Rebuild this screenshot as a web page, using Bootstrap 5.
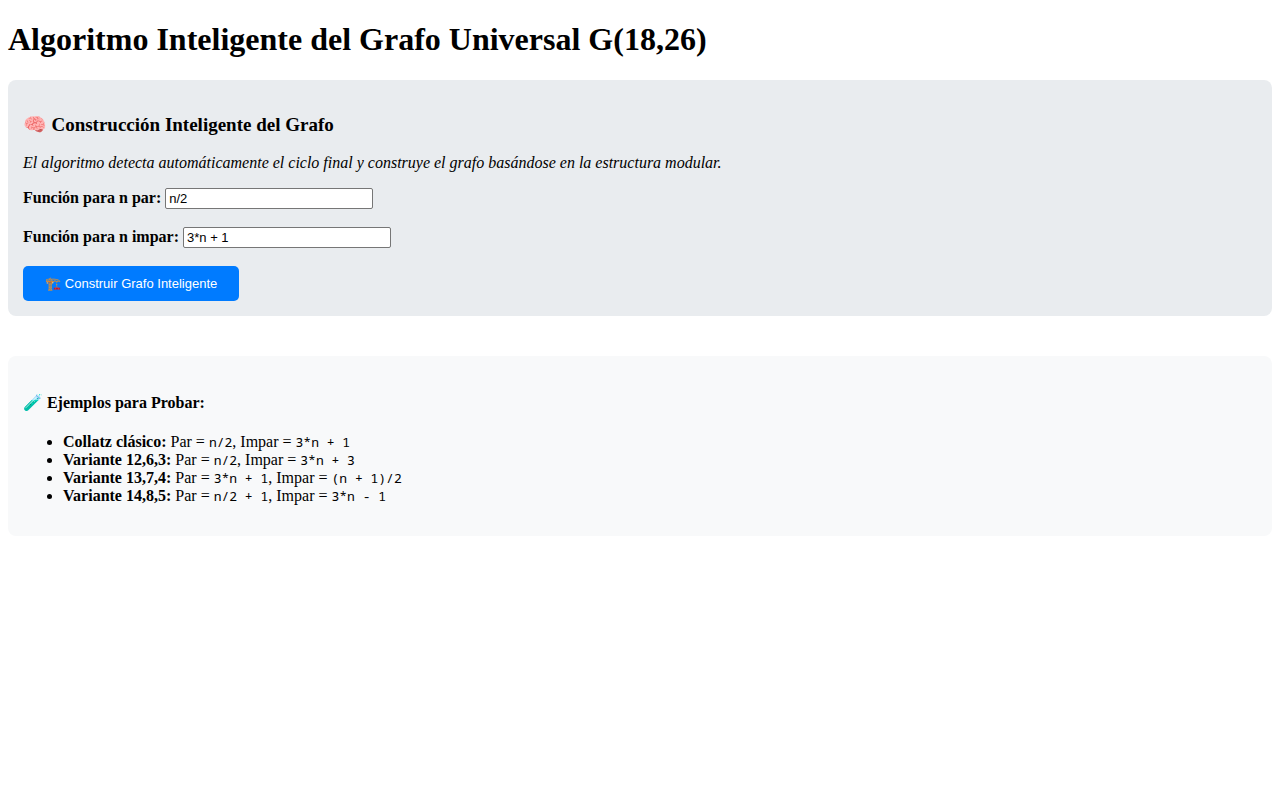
<!DOCTYPE html>
<html lang="es">
<head>
<meta charset="utf-8">
<meta name="viewport" content="width=device-width, initial-scale=1">
<title>Algoritmo Inteligente del Grafo Universal G(18,26)</title>
<link href="https://cdn.jsdelivr.net/npm/bootstrap@5.3.0/dist/css/bootstrap.min.css" rel="stylesheet">
<style>
  body { font-family: "Liberation Serif", "Noto Color Emoji", serif; font-size: 16px; line-height: 18px; color: #000; }
  h1, h2, h3 { font-weight: 700; color: #000; }
  .page-title { font-size: 32px; line-height: 37px; margin: 21px 0 22px; }
  .panel { padding: 15px; border-radius: 8px; }
  .panel-build { background: #e9ecef; margin-bottom: 40px; }
  .panel-examples { background: #f8f9fa; }
  .panel-title { font-size: 19px; line-height: 22px; margin: 19px 0 18px; }
  .examples-title { font-size: 16px; line-height: 19px; margin: 22px 0 21px; }
  .field { height: 21px; margin-bottom: 18px; }
  .field input { width: 208px; height: 21px; padding: 1px 3px; border: 1px solid #767676; border-radius: 2px; font-family: "Liberation Sans", sans-serif; font-size: 13px; line-height: 15px; color: #000; background: #fff; }
  .btn-build { --bs-btn-bg: #007bff; --bs-btn-hover-bg: #0069d9; --bs-btn-color: #fff; --bs-btn-hover-color: #fff; --bs-btn-border-width: 0; --bs-btn-padding-x: 22px; --bs-btn-padding-y: 10px; --bs-btn-font-family: "Liberation Sans", "Noto Color Emoji", sans-serif; --bs-btn-font-size: 13px; --bs-btn-line-height: 15px; --bs-btn-border-radius: 5px; }
  .examples { padding-left: 40px; margin-bottom: 16px; }
  code { font-family: "Noto Sans Mono", "DejaVu Sans Mono", monospace; font-size: 13px; line-height: 15px; color: inherit; }
</style>
</head>
<body>
<main class="container-fluid px-2 overflow-hidden">
  <h1 class="page-title">Algoritmo Inteligente del Grafo Universal G(18,26)</h1>

  <section class="panel panel-build">
    <h2 class="panel-title">🧠 Construcción Inteligente del Grafo</h2>
    <p class="fst-italic mb-3">El algoritmo detecta automáticamente el ciclo final y construye el grafo basándose en la estructura modular.</p>
    <form>
      <div class="field d-flex align-items-baseline gap-1">
        <label for="par" class="fw-bold">Función para n par:</label>
        <input type="text" id="par" value="n/2">
      </div>
      <div class="field d-flex align-items-baseline gap-1">
        <label for="impar" class="fw-bold">Función para n impar:</label>
        <input type="text" id="impar" value="3*n + 1">
      </div>
      <button type="button" class="btn btn-build d-block">🏗️ Construir Grafo Inteligente</button>
    </form>
  </section>

  <section class="panel panel-examples">
    <h3 class="examples-title">🧪 Ejemplos para Probar:</h3>
    <ul class="examples">
      <li><strong>Collatz clásico:</strong> Par = <code>n/2</code>, Impar = <code>3*n + 1</code></li>
      <li><strong>Variante 12,6,3:</strong> Par = <code>n/2</code>, Impar = <code>3*n + 3</code></li>
      <li><strong>Variante 13,7,4:</strong> Par = <code>3*n + 1</code>, Impar = <code>(n + 1)/2</code></li>
      <li><strong>Variante 14,8,5:</strong> Par = <code>n/2 + 1</code>, Impar = <code>3*n - 1</code></li>
    </ul>
  </section>
</main>
<script src="https://cdn.jsdelivr.net/npm/bootstrap@5.3.0/dist/js/bootstrap.bundle.min.js"></script>
</body>
</html>
